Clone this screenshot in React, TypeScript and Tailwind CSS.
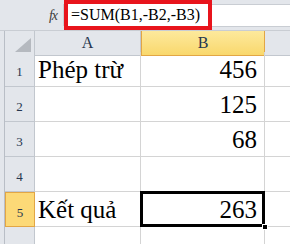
import React from 'react';

const serif = { fontFamily: '"Liberation Serif", "Times New Roman", serif' };

const rows = [
  { n: 1, a: 'Phép trừ', b: '456' },
  { n: 2, a: '', b: '125' },
  { n: 3, a: '', b: '68' },
  { n: 4, a: '', b: '' },
  { n: 5, a: 'Kết quả', b: '263' },
];

export default function App() {
  return (
    <div className="w-[290px] h-[244px] overflow-hidden bg-white text-black" style={serif}>
      {/* Formula bar */}
      <div className="flex h-[31px] bg-[#e3e6eb] border-b border-[#c9cdd3]">
        <div className="w-[64px] flex items-center justify-end pr-[6px] border-r border-[#c9cdd3] my-[4px]">
          <span className="italic text-[14px] text-[#3c3c3c] tracking-[-1px]">fx</span>
        </div>
        <div className="w-[148px] h-[30px] border-4 border-[#e8141c] bg-white flex items-center pl-[3px] text-[16px] leading-none whitespace-nowrap overflow-hidden">
          =SUM(B1,-B2,-B3)
        </div>
        <div className="flex-1 mt-[4px] mb-[3px] bg-white border-y border-[#c9cdd3]" />
      </div>

      {/* Column headers */}
      <div className="grid grid-cols-[5px_30px_106px_124px_1fr] h-[21px] text-[16px] text-[#26374f]">
        <div className="bg-[#e3e6eb] border-r border-[#b9bec6]" />
        <div className="bg-[#e3e6eb] border-r border-b border-[#c2c7ce] flex items-end justify-end p-[3px]">
          <svg width="16" height="14" viewBox="0 0 16 14">
            <polygon points="16,0 16,14 0,14" fill="#b5b9bf" />
          </svg>
        </div>
        <div className="bg-[#e3e6eb] border-r border-b border-[#c2c7ce] flex items-center justify-center">A</div>
        <div className="bg-gradient-to-b from-[#fde99c] to-[#f9d86c] border-x border-b border-[#e2a645] flex items-center justify-center">B</div>
        <div className="bg-[#e3e6eb] border-b border-[#c2c7ce]" />
      </div>

      {/* Rows */}
      {rows.map((r) => {
        const sel = r.n === 5;
        return (
          <div key={r.n} className="grid grid-cols-[5px_30px_106px_124px_1fr] h-[35px]">
            <div className="bg-[#e3e6eb] border-r border-[#b9bec6]" />
            {sel ? (
              <div className="bg-[#fcd977] border border-[#e2a645] flex items-center justify-center pt-[6px] text-[13px] text-[#26374f]">
                {r.n}
              </div>
            ) : (
              <div className="bg-[#e3e6eb] border-r border-b border-[#c2c7ce] flex items-center justify-center pt-[6px] text-[13px] text-[#26374f]">
                {r.n}
              </div>
            )}
            <div className="border-r border-b border-[#d4d4d4] flex items-center pl-[3px] text-[25px] leading-none whitespace-nowrap">
              {r.a}
            </div>
            <div className="relative border-r border-b border-[#d4d4d4] flex items-center justify-end pr-[7px] text-[25px] leading-none">
              {r.b}
              {sel && (
                <>
                  <div className="absolute inset-[-1px] border-[3px] border-black" />
                  <div className="absolute right-[-4px] bottom-[-4px] w-[6px] h-[6px] bg-black border border-white" />
                </>
              )}
            </div>
            <div className="border-b border-[#d4d4d4]" />
          </div>
        );
      })}
      <div className="grid grid-cols-[5px_30px_106px_124px_1fr] h-[35px]">
        <div className="bg-[#e3e6eb] border-r border-[#b9bec6]" />
        <div className="bg-[#e3e6eb] border-r border-[#c2c7ce]" />
        <div className="border-r border-[#d4d4d4]" />
        <div className="border-r border-[#d4d4d4]" />
        <div />
      </div>
    </div>
  );
}
